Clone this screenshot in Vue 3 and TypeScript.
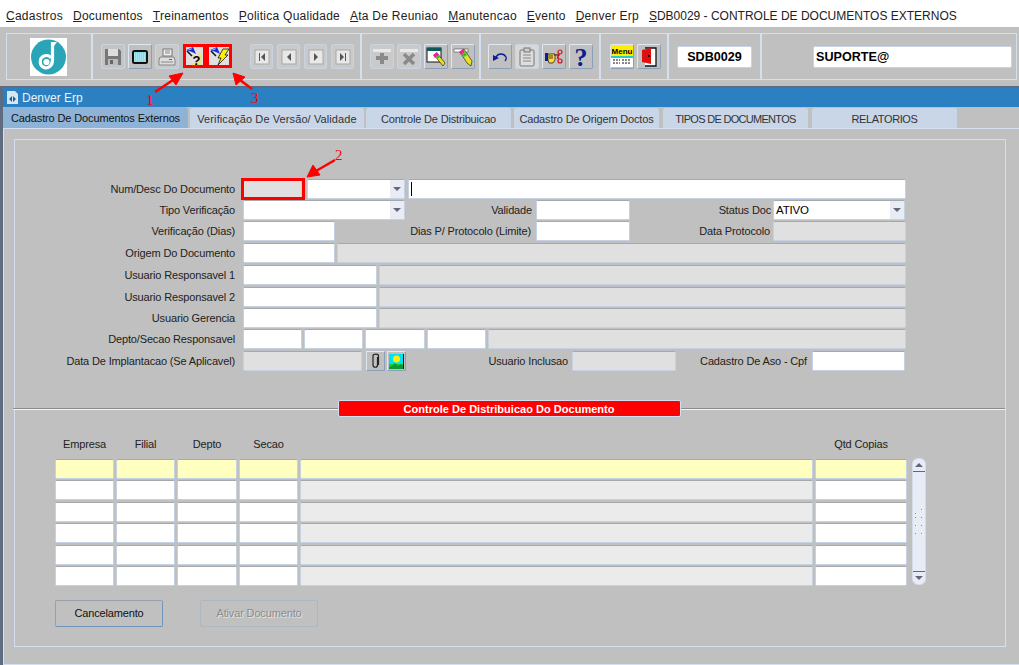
<script setup lang="ts">
type Item = { t: 'label' | 'in' | 'dis' | 'sel' | 'mark' | 'caret' | 'clip' | 'pic'; w: number; g?: number; text?: string }
type Row = { h: number; items: Item[] }

const menus = [
  ['C', 'adastros'], ['D', 'ocumentos'], ['T', 'reinamentos'], ['P', 'olitica Qualidade'],
  ['A', 'ta De Reuniao'], ['M', 'anutencao'], ['E', 'vento'], ['D', 'enver Erp'],
]

const tabs = [
  { text: 'Cadastro De Documentos Externos', w: 185, g: 0, ls: -0.13, active: true },
  { text: 'Verificação De Versão/ Validade', w: 174, g: 2, ls: 0.1 },
  { text: 'Controle De Distribuicao', w: 145, g: 2, ls: -0.17 },
  { text: 'Cadastro De Origem Doctos', w: 145, g: 3, ls: -0.16 },
  { text: 'TIPOS DE DOCUMENTOS', w: 145, g: 4, ls: -0.7 },
  { text: 'RELATORIOS', w: 145, g: 4, ls: -0.4 },
]

const rows: Row[] = [
  { h: 21, items: [
    { t: 'label', w: 220, text: 'Num/Desc Do Documento' },
    { t: 'mark', g: 6, w: 64 },
    { t: 'sel', g: 2, w: 98 },
    { t: 'caret', g: 3, w: 498 },
  ] },
  { h: 21, items: [
    { t: 'label', w: 220, text: 'Tipo Verificação' },
    { t: 'sel', g: 8, w: 162 },
    { t: 'label', w: 127, text: 'Validade' },
    { t: 'in', g: 4, w: 94 },
    { t: 'label', w: 141, text: 'Status Doc' },
    { t: 'sel', g: 2, w: 132, text: 'ATIVO' },
  ] },
  { h: 22, items: [
    { t: 'label', w: 220, text: 'Verificação (Dias)' },
    { t: 'in', g: 8, w: 92 },
    { t: 'label', w: 196, text: 'Dias P/ Protocolo (Limite)' },
    { t: 'in', g: 5, w: 94 },
    { t: 'label', w: 140, text: 'Data Protocolo' },
    { t: 'dis', g: 3, w: 133 },
  ] },
  { h: 22, items: [
    { t: 'label', w: 220, text: 'Origem Do Documento' },
    { t: 'in', g: 8, w: 92 },
    { t: 'dis', g: 2, w: 569 },
  ] },
  { h: 22, items: [
    { t: 'label', w: 220, text: 'Usuario Responsavel 1' },
    { t: 'in', g: 8, w: 134 },
    { t: 'dis', g: 2, w: 527 },
  ] },
  { h: 21, items: [
    { t: 'label', w: 220, text: 'Usuario Responsavel 2' },
    { t: 'in', g: 8, w: 134 },
    { t: 'dis', g: 2, w: 527 },
  ] },
  { h: 21, items: [
    { t: 'label', w: 220, text: 'Usuario Gerencia' },
    { t: 'in', g: 8, w: 134 },
    { t: 'dis', g: 2, w: 527 },
  ] },
  { h: 22, items: [
    { t: 'label', w: 220, text: 'Depto/Secao Responsavel' },
    { t: 'in', g: 8, w: 59 },
    { t: 'in', g: 2, w: 59 },
    { t: 'in', g: 2, w: 60 },
    { t: 'in', g: 2, w: 59 },
    { t: 'dis', g: 2, w: 418 },
  ] },
  { h: 21, items: [
    { t: 'label', w: 220, text: 'Data De Implantacao (Se Aplicavel)' },
    { t: 'dis', g: 8, w: 119 },
    { t: 'clip', g: 4, w: 19 },
    { t: 'pic', g: 2, w: 19 },
    { t: 'label', w: 162, text: 'Usuario Inclusao' },
    { t: 'dis', g: 4, w: 104 },
    { t: 'label', w: 131, text: 'Cadastro De Aso - Cpf' },
    { t: 'in', g: 5, w: 93 },
  ] },
]

const columns = [
  { text: 'Empresa', w: 59 },
  { text: 'Filial', w: 59 },
  { text: 'Depto', w: 60 },
  { text: 'Secao', w: 59 },
  { text: '', w: 513 },
  { text: 'Qtd Copias', w: 92 },
]
const gridRows = [20, 20, 20, 20, 20, 20]
</script>

<template>
  <div class="page">
    <div class="menubar">
      <span v-for="(m, i) in menus" :key="i" class="menu"><u>{{ m[0] }}</u>{{ m[1] }}</span>
      <span class="menu form-name"><u>S</u>DB0029 - CONTROLE DE DOCUMENTOS EXTERNOS</span>
    </div>

    <div class="toolbar">
      <div class="toolbox">
        <div class="group logo-group">
          <svg class="logo" width="37" height="38" viewBox="0 0 37 38">
            <rect width="37" height="38" fill="#fff" />
            <circle cx="18.5" cy="19" r="17.5" fill="#2aa5b7" />
            <path d="M22.500 4 V22 C22.500 28 18 31 14 29.500 C9 27.500 9 20 14 18 C17 17 20 18 21 20 M15 24 C15 22 18 22 18 24 C18 26 15 26 15 24" fill="none" stroke="#fff" stroke-width="3.200" />
            <path d="M21 4 H27 L24 8 Z" fill="#fff" />
          </svg>
        </div>

        <div class="group g-file">
          <button class="tool off save">
            <svg width="18" height="18" viewBox="0 0 18 18"><path d="M1 1 H15 L17 3 V17 H1 Z" fill="#777" /><rect x="4" y="1" width="10" height="7" fill="#ddd" /><rect x="4" y="11" width="10" height="6" fill="#bbb" /><rect x="6" y="12" width="3" height="4" fill="#666" /></svg>
          </button>
          <button class="tool">
            <svg width="18" height="16" viewBox="0 0 18 16"><rect x="1" y="1" width="16" height="14" rx="2.500" fill="#111" /><rect x="3" y="3" width="12" height="10" fill="#7fdcec" /><path d="M3 5 H15 M3 7 H15 M3 9 H15 M3 11 H15" stroke="#e8f4f8" stroke-width="0.800" stroke-dasharray="1 1" /></svg>
          </button>
          <button class="tool off">
            <svg width="18" height="18" viewBox="0 0 18 18"><rect x="5" y="1" width="9" height="7" fill="#eee" stroke="#777" /><path d="M7 3 H12 M7 5 H12" stroke="#888" /><path d="M2 9 H16 L17 12 V17 H1 V12 Z" fill="#ddd" stroke="#888" /><path d="M3 14 H15" stroke="#888" /><rect x="11" y="11" width="3" height="1" fill="#666" /></svg>
          </button>
          <button class="tool mark">
            <svg width="17" height="26" viewBox="0 0 17 26">
              <g transform="translate(0 4)"><path d="M0 3 L7 0 L10 7 L6 5 Z" fill="#1530d0" /><path d="M1 3 L6 1 L5 3 Z" fill="#60c8f0" /><path d="M1 4 L6 9" stroke="#111" stroke-width="1.500" /><path d="M13 7 V18 M15 7 V18 M6 17.500 H12" stroke="#e8e060" stroke-width="1.400" stroke-dasharray="1 1" /></g>
              <text x="6.500" y="21.500" class="qmark">?</text>
            </svg>
          </button>
          <button class="tool mark second">
            <svg width="20" height="18" viewBox="0 0 20 18"><path d="M1 3 L8 0 L11 7 L7 5 Z" fill="#1530d0" /><path d="M2 3 L7 1 L6 3 Z" fill="#60c8f0" /><path d="M2 4 L7 9" stroke="#111" stroke-width="1.500" /><path d="M14 2 H20 L16 8 H19 L9 18 L12 11 H9 Z" fill="#ffee00" stroke="#111" stroke-width="0.800" /></svg>
          </button>

          <div class="g-nav">
            <button v-for="n in 4" :key="n" class="tool nav off">
              <svg width="16" height="16" viewBox="0 0 16 16">
                <rect x="1" y="1" width="14" height="14" fill="#e8e8e8" stroke="#a8a8a8" />
                <path v-if="n === 1" d="M5 4 H6 V12 H5 Z M11 4 V12 L7 8 Z" fill="#555" />
                <path v-if="n === 2" d="M10 4 V12 L6 8 Z" fill="#555" />
                <path v-if="n === 3" d="M6 4 V12 L10 8 Z" fill="#555" />
                <path v-if="n === 4" d="M10 4 H11 V12 H10 Z M5 4 V12 L9 8 Z" fill="#555" />
              </svg>
            </button>
          </div>
        </div>

        <div class="group g-edit">
          <button class="tool off">
            <svg width="20" height="18" viewBox="0 0 20 18"><rect x="1" y="1" width="18" height="3" fill="#e8e8e8" /><path d="M10 5 V16 M4 10 H16" stroke="#8a8a8a" stroke-width="4" /></svg>
          </button>
          <button class="tool off">
            <svg width="20" height="18" viewBox="0 0 20 18"><rect x="1" y="1" width="18" height="3" fill="#e8e8e8" /><path d="M5 6 L15 16 M15 6 L5 16" stroke="#8a8a8a" stroke-width="3.600" /></svg>
          </button>
          <button class="tool">
            <svg width="20" height="20" viewBox="0 0 20 20"><rect x="1" y="1" width="14" height="14" fill="#fff" stroke="#111" /><rect x="1" y="1" width="14" height="3" fill="#0a5a5a" /><path d="M8 8 L11 6 L19 16 L17 19 Z" fill="#e8e020" stroke="#111" stroke-width="0.600" /><path d="M7 8 L11 5 L13 8 L9 11 Z" fill="#f020a0" /><path d="M10 10 L13 8 L14 10 L11 12 Z" fill="#30c040" /></svg>
          </button>
          <button class="tool">
            <svg width="20" height="20" viewBox="0 0 20 20"><rect x="1" y="2" width="14" height="3" fill="#fff" stroke="#333" stroke-width="0.500" /><path d="M7 5 L11 2 L19 14 L18 19 L14 16 Z" fill="#e8e020" stroke="#111" stroke-width="0.600" /><path d="M6 5 L10 2 L12 5 L8 8 Z" fill="#f020a0" /><path d="M9 7 L12 5 L14 8 L11 10 Z" fill="#30c040" /></svg>
          </button>
        </div>

        <div class="group g-misc">
          <button class="tool">
            <svg width="18" height="18" viewBox="0 0 18 18"><path d="M5 9 C7 5 13 5 15 9 C16 11 15 12 14 13" fill="none" stroke="#0a1f9a" stroke-width="1.300" /><path d="M2 7 L8 10 L2 13 Z" fill="#0a1f9a" /></svg>
          </button>
          <button class="tool off light">
            <svg width="18" height="20" viewBox="0 0 18 20"><rect x="2" y="3" width="14" height="16" rx="1" fill="#ddd" stroke="#777" /><rect x="6" y="1" width="6" height="4" fill="#ccc" stroke="#777" /><path d="M5 8 H13 M5 11 H13 M5 14 H13" stroke="#888" /></svg>
          </button>
          <button class="tool">
            <svg width="20" height="18" viewBox="0 0 20 18"><rect x="1" y="5" width="3" height="8" fill="#1020a0" /><path d="M4 6 H11 V12 L9 15 H5 L4 12 Z" fill="#ffd840" stroke="#111" stroke-width="0.700" /><path d="M6 7 V11 M8 7 V11 M10 7 H16" stroke="#111" stroke-width="0.800" /><circle cx="16" cy="4" r="2" fill="none" stroke="#d01020" stroke-width="1.200" /><circle cx="16" cy="13" r="2" fill="none" stroke="#d01020" stroke-width="1.200" /><path d="M15 6 L13 11 M15 11 L13 6" stroke="#d01020" /></svg>
          </button>
          <button class="tool">
            <svg width="18" height="30" viewBox="0 0 18 30"><text x="9" y="24" class="help">?</text></svg>
          </button>
        </div>

        <div class="group g-exit">
          <button class="tool">
            <svg width="22" height="23" viewBox="0 0 22 23"><rect x="0" y="0" width="22" height="11" fill="#ffee00" /><text x="11" y="9" class="menu-word">Menu</text><rect x="0" y="11" width="22" height="11" fill="#fff" /><rect x="0" y="11" width="22" height="2" fill="#20d0c8" /><path d="M2 15 H9 M11 15 H20 M2 18 H9 M11 18 H20" stroke="#111" stroke-dasharray="2 1" /></svg>
          </button>
          <button class="tool">
            <svg width="20" height="20" viewBox="0 0 20 20"><path d="M6 1 H17 V19 H6" fill="#fff" stroke="#111" stroke-width="1.300" /><path d="M3 3 L12 1 V17 L3 15 Z" fill="#e01010" /><rect x="9" y="8" width="2" height="2" fill="#111" /></svg>
          </button>
        </div>

        <div class="group g-code"><div class="codebox">SDB0029</div></div>
        <div class="g-user"><div class="userbox">SUPORTE@</div></div>
      </div>
    </div>

    <div class="window">
      <div class="titlebar">
        <svg width="13" height="15" viewBox="0 0 13 15"><path d="M1 1 H9 L12 4 V14 H1 Z" fill="#d8e6f4" /><path d="M3 9 L6 6 V12 Z M7 6 L10 9 L7 12 Z" fill="#1f5f98" /></svg>
        <span>Denver Erp</span>
      </div>
      <div class="tabs">
        <div
          v-for="tab in tabs"
          :key="tab.text"
          class="tab"
          :class="{ active: tab.active }"
          :style="{ width: tab.w + 'px', marginLeft: tab.g + 'px', letterSpacing: tab.ls + 'px' }"
        >{{ tab.text }}</div>
      </div>

      <div class="panel">
        <div class="inner">
          <div class="form">
            <div v-for="(row, r) in rows" :key="r" class="row" :style="{ height: row.h + 'px' }">
              <template v-for="(it, i) in row.items" :key="i">
                <div
                  class="item"
                  :class="it.t"
                  :style="{ width: it.w + 'px', marginLeft: (it.g || 0) + 'px' }"
                >
                  <template v-if="it.t === 'label'">{{ it.text }}</template>
                  <template v-else-if="it.t === 'sel'">
                    <span class="value">{{ it.text }}</span>
                    <span class="drop"></span>
                  </template>
                  <span v-else-if="it.t === 'caret'" class="cursor"></span>
                  <div v-else-if="it.t === 'mark'" class="mark-inner"></div>
                  <svg v-else-if="it.t === 'clip'" width="9" height="16" viewBox="0 0 9 16"><path d="M6.500 4 V12 C6.500 15 2 15 2 12 V3 C2 0.500 7.500 0.500 7.500 3 V12" fill="none" stroke="#222" stroke-width="1.200" /></svg>
                  <svg v-else-if="it.t === 'pic'" width="15" height="15" viewBox="0 0 15 15"><rect width="15" height="15" fill="#00e0f0" /><rect y="10" width="15" height="5" fill="#10d040" /><path d="M3 12 L6 9 L9 12 L12 10 L15 13 V15 H0 V13 Z" fill="#0a9a30" /><circle cx="7.500" cy="5" r="3.500" fill="#ffee00" /><path d="M14.500 0 V15" stroke="#111" /></svg>
                </div>
              </template>
            </div>
          </div>

          <div class="divider">
            <div class="divider-title">Controle De Distribuicao Do Documento</div>
          </div>

          <div class="table">
            <div class="grid-wrap">
              <div class="heads">
                <div v-for="(c, i) in columns" :key="i" class="head" :style="{ width: c.w + 'px' }">{{ c.text }}</div>
              </div>
              <div v-for="(h, r) in gridRows" :key="r" class="grid-row">
                <div
                  v-for="(c, i) in columns"
                  :key="i"
                  class="cell"
                  :class="{ current: r === 0, locked: r > 0 && i === 4 }"
                  :style="{ width: c.w + 'px', height: h + 'px' }"
                ></div>
              </div>
            </div>
            <div class="scroll">
              <span class="arrow up"></span>
              <svg class="grip" width="10" height="28" viewBox="0 0 10 28">
                <path d="M1 6 L2 5 M7 2 L8 1 M1 10 L2 9 M7 10 L8 9 M1 18 L2 17 M7 18 L8 17 M1 26 L2 25 M7 26 L8 25" stroke="#889" />
                <path d="M2 7 L3 6 M8 3 L9 2 M2 19 L3 18 M8 27 L9 26" stroke="#fff" />
              </svg>
              <span class="arrow down"></span>
            </div>
          </div>

          <div class="actions">
            <button class="action">Cancelamento</button>
            <button class="action disabled">Ativar Documento</button>
          </div>
        </div>
      </div>
    </div>

    <svg class="notes" width="1019" height="665" viewBox="0 0 1019 665">
      <g fill="#f00" stroke="#f00">
        <path d="M155 92 L173 80" stroke-width="2.500" />
        <path d="M183 73 L169 76 L176 85 Z" stroke-width="1" />
        <path d="M252 89 L240 80" stroke-width="2.500" />
        <path d="M233 73 L236 85 L245 77 Z" stroke-width="1" />
        <path d="M335 160 L316 171" stroke-width="2.500" />
        <path d="M307 177 L313 165 L320 175 Z" stroke-width="1" />
      </g>
      <text x="146" y="105" class="note">1</text>
      <text x="251" y="103" class="note">3</text>
      <text x="335" y="160" class="note">2</text>
    </svg>
  </div>
</template>

<style>
html, body {
  margin: 0;
  background: #fff;
}
</style>

<style scoped>
.page {
  position: relative;
  width: 1019px;
  height: 665px;
  overflow: hidden;
  background: #c0c0c0;
  font-family: "Liberation Sans", Arial, sans-serif;
  font-size: 11px;
  letter-spacing: -0.15px;
  color: #111;
}

.menubar {
  height: 27px;
  background: #fff;
  display: flex;
  align-items: center;
  padding-left: 6px;
  padding-top: 4px;
  box-sizing: border-box;
  gap: 10px;
  font-size: 12px;
  letter-spacing: 0.25px;
  color: #222;
  white-space: nowrap;
}
.form-name { letter-spacing: 0; }

.toolbar {
  height: 59px;
  padding: 6px 2px 0 6px;
  box-sizing: border-box;
  background: #c0c0c0;
}
.toolbox {
  height: 47px;
  display: flex;
  border: 1px solid #d4e0f0;
  box-sizing: border-box;
}
.group {
  display: flex;
  align-items: center;
  gap: 3px;
  box-sizing: border-box;
  border-right: 2px solid #d4e0f0;
}
.logo-group { width: 86px; padding-left: 23px; }
.g-file { width: 269px; padding-left: 8px; }
.g-nav { display: flex; gap: 4px; margin-left: 15px; }
.g-edit { width: 119px; padding-left: 8px; }
.g-misc { width: 120px; padding-left: 7px; }
.g-exit { width: 68px; padding-left: 9px; }
.g-code { width: 93px; padding-left: 8px; }
.g-user { flex: 1; display: flex; align-items: center; padding-left: 51px; padding-right: 4px; }

.tool {
  width: 24px;
  height: 25px;
  padding: 0;
  margin: 0;
  background: #c0c0c0;
  border: 1px solid #8aa0b8;
  border-top-color: #dfe8f2;
  border-left-color: #dfe8f2;
  border-radius: 2px;
  display: flex;
  align-items: center;
  justify-content: center;
  flex: none;
}
.tool svg { flex: none; }
.tool.off { border-color: #c8d4e2; background: #cacaca; }
.tool.off.save { background: #c4c4c4; }
.tool.off.light { background: #d8d8d8; }
.tool.nav { width: 23px; }
.tool.mark {
  width: 23px;
  height: 24px;
  border: 3px solid #f00;
  border-radius: 0;
  margin-left: 1px;
}
.tool.mark.second { width: 26px; margin-left: -3px; }

.codebox, .userbox {
  height: 22px;
  line-height: 20px;
  background: #fff;
  border: 1px solid #c8d4e6;
  border-radius: 2px;
  box-sizing: border-box;
  font-weight: bold;
  font-size: 12.600px;
  letter-spacing: 0;
  color: #000;
}
.codebox { width: 75px; text-align: center; }
.userbox { width: 100%; padding-left: 2px; }

.window {
  height: 579px;
  background: #c0c0c0;
  border-top: 2px solid #5d6c80;
  border-left: 3px solid #5d6c80;
  box-sizing: border-box;
  display: flex;
  flex-direction: column;
}
.titlebar {
  height: 19px;
  flex: none;
  background: #2b80c1;
  color: #e8f2fb;
  display: flex;
  align-items: center;
  gap: 3px;
  padding-left: 3px;
  font-size: 12px;
  letter-spacing: 0;
}
.tabs {
  height: 21px;
  flex: none;
  display: flex;
  align-items: flex-end;
}
.tab {
  height: 20px;
  line-height: 22px;
  flex: none;
  text-align: center;
  font-size: 11px;
  color: #333;
  background: #c8d6e8;
  border-radius: 3px 3px 0 0;
  white-space: nowrap;
}
.tab.active {
  height: 21px;
  line-height: 23px;
  background: #8fb3d6;
  color: #111;
}

.panel {
  flex: 1;
  min-height: 0;
  border: 1px solid #d4e0f0;
  border-right: none;
  box-sizing: border-box;
  padding: 10px 13px 17px 10px;
}
.inner {
  height: 100%;
  border: 1px solid #d4e0f0;
  box-sizing: border-box;
}

.form {
  padding-top: 39px;
  height: 260px;
  box-sizing: border-box;
}
.row {
  display: flex;
  align-items: flex-start;
}
.item {
  height: 20px;
  flex: none;
  box-sizing: border-box;
}
.label {
  text-align: right;
  line-height: 20px;
  color: #222;
  white-space: nowrap;
}
.in, .dis, .sel, .caret {
  background: #fff;
  border: 1px solid #c4d2e4;
  border-top-color: #a8a8a8;
  border-radius: 2px;
}
.dis { background: #e0e0e0; }
.sel {
  display: flex;
  justify-content: space-between;
  line-height: 18px;
  font-size: 11.500px;
  padding-left: 2px;
  color: #000;
}
.drop {
  width: 14px;
  background: #e8ecf4;
  position: relative;
  flex: none;
}
.drop::after {
  content: "";
  position: absolute;
  left: 3px;
  top: 7px;
  border-left: 4px solid transparent;
  border-right: 4px solid transparent;
  border-top: 4px solid #667;
}
.caret { padding: 2px 0 0 2px; }
.cursor {
  display: block;
  width: 1px;
  height: 14px;
  background: #000;
}
.mark {
  border: 3px solid #f00;
  height: 22px;
  margin-top: -1px;
  background: #e0e0e0;
}
.mark-inner { height: 100%; border-right: 1px solid #c4d2e4; box-sizing: border-box; }
.clip, .pic {
  background: #c0c0c0;
  border: 1px solid #8aa0b8;
  border-top-color: #dfe8f2;
  border-left-color: #dfe8f2;
  display: flex;
  align-items: center;
  justify-content: center;
}

.divider {
  height: 18px;
  margin-left: -2px;
  display: flex;
  justify-content: center;
  background:
    linear-gradient(#8c8c8c, #8c8c8c) 0 8px / 100% 1px no-repeat,
    linear-gradient(#f0f4fa, #f0f4fa) 0 9px / 100% 1px no-repeat;
}
.divider-title {
  width: 343px;
  height: 17px;
  line-height: 17px;
  text-align: center;
  background: #f00;
  color: #fff;
  font-weight: bold;
  letter-spacing: 0.02px;
  border: 1px solid #d4e0f0;
  border-radius: 2px;
  box-sizing: border-box;
}

.table {
  padding: 15px 0 0 40px;
  display: flex;
}
.heads {
  display: flex;
  gap: 2px;
  height: 26px;
}
.head {
  text-align: center;
  line-height: 23px;
  flex: none;
  color: #222;
}
.grid-row {
  display: flex;
  gap: 2px;
  margin-bottom: 1.400px;
}
.cell {
  flex: none;
  background: #fff;
  border: 1px solid #c4d2e4;
  border-top-color: #a8a8a8;
  border-radius: 2px;
  box-sizing: border-box;
}
.cell.current { background: #ffffc0; }
.cell.locked { background: #ebebeb; }

.scroll {
  width: 14px;
  height: 127px;
  margin: 25px 0 0 5px;
  background: #e8ecf6;
  border: 1px solid #d4dcea;
  border-radius: 6px;
  box-sizing: border-box;
  display: flex;
  flex-direction: column;
  align-items: center;
  justify-content: space-between;
}
.arrow {
  width: 100%;
  height: 13px;
  position: relative;
  display: block;
  box-sizing: border-box;
}
.arrow.up { border-bottom: 1px solid #667; }
.arrow.down { border-top: 1px solid #667; }
.arrow::after {
  content: "";
  position: absolute;
  left: 2px;
  border-left: 4px solid transparent;
  border-right: 4px solid transparent;
}
.arrow.up::after { top: 4px; border-bottom: 4px solid #667; }
.arrow.down::after { top: 4px; border-top: 4px solid #667; }

.actions {
  display: flex;
  gap: 37px;
  padding: 13px 0 0 40px;
}
.action {
  width: 108px;
  height: 27px;
  padding: 0 0 1px;
  font: 11px "Liberation Sans", Arial, sans-serif;
  letter-spacing: -0.15px;
  color: #111;
  background: #c0c0c0;
  border: 1px solid #9aa0a8;
  border-right-color: #6f94bc;
  border-bottom-color: #6f94bc;
  border-radius: 2px;
}
.action.disabled {
  width: 118px;
  color: #8c8c8c;
  text-shadow: 1px 1px 0 #e4e4e4;
  border-color: #aeb6c0;
}

.notes {
  position: absolute;
  left: 0;
  top: 0;
  pointer-events: none;
}
.note {
  font-family: "Liberation Serif", serif;
  font-size: 15px;
  fill: #f00;
}
.qmark {
  font: bold 13px "Liberation Sans", sans-serif;
  fill: #000;
}
.help {
  font: bold 26px "Liberation Serif", serif;
  fill: #0a1f8a;
  text-anchor: middle;
}
.menu-word {
  font: bold 8px "Liberation Sans", sans-serif;
  fill: #000;
  text-anchor: middle;
}
</style>
